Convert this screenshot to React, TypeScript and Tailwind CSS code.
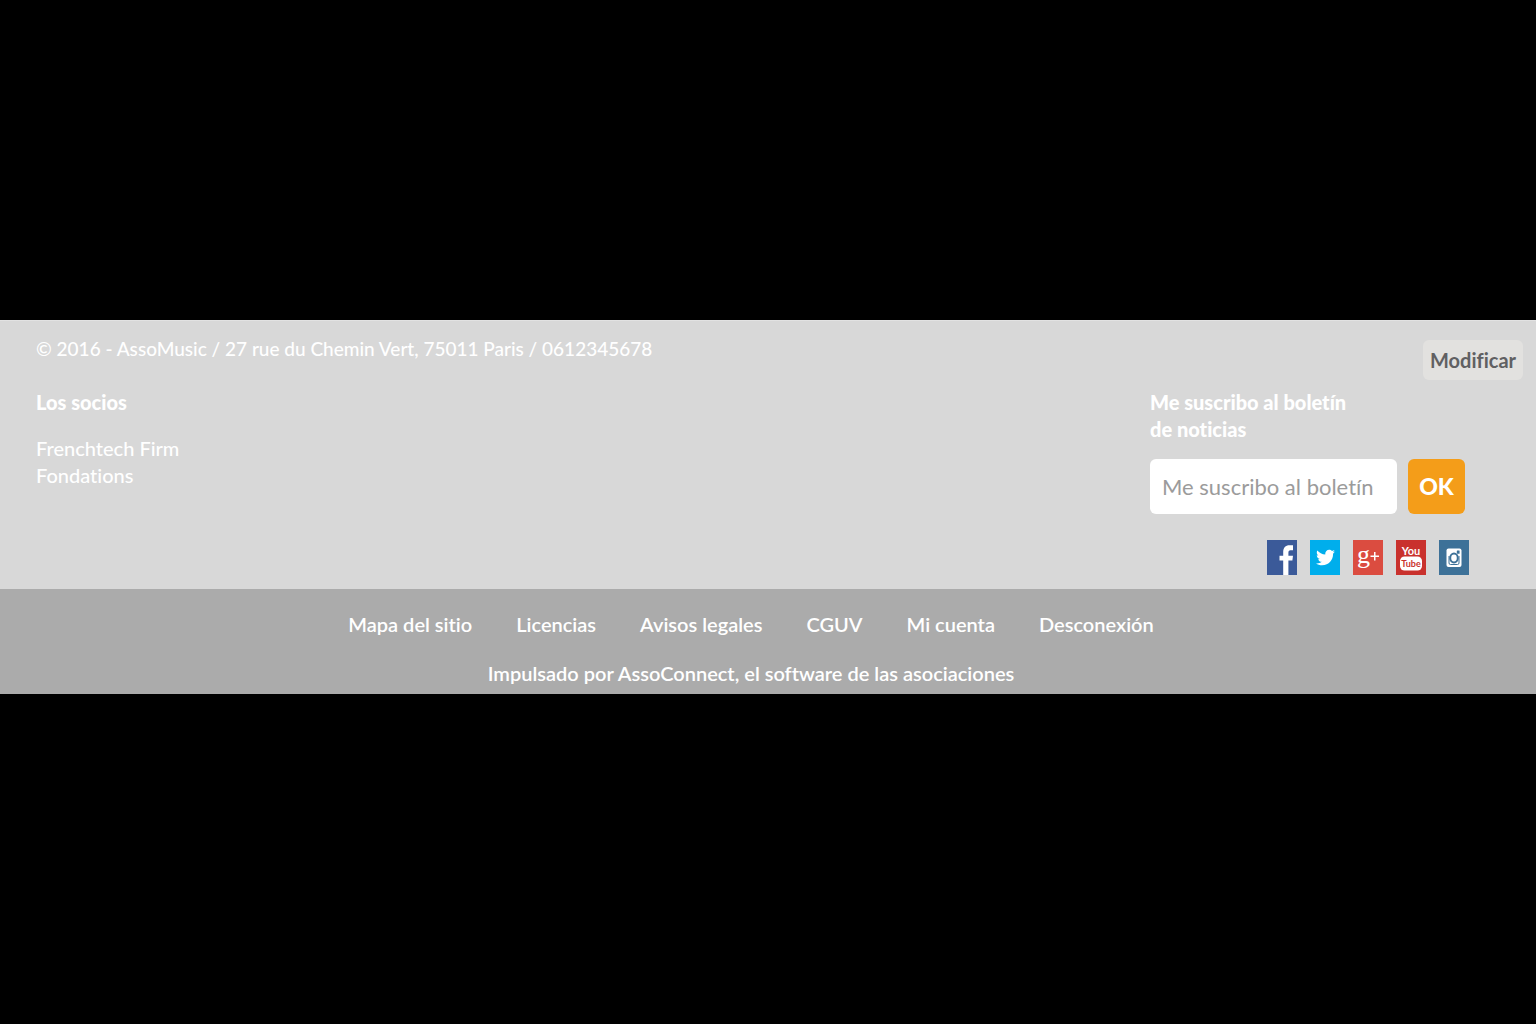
import type { ReactNode } from "react";
import { FaTwitter } from "react-icons/fa";

const partners = ["Frenchtech Firm", "Fondations"];

const links = ["Mapa del sitio", "Licencias", "Avisos legales", "CGUV", "Mi cuenta", "Desconexión"];

function SocialLink({ label, color, children }: { label: string; color: string; children: ReactNode }) {
  return (
    <a href="#" aria-label={label} className={`flex h-[35px] w-[30px] items-center justify-center text-white ${color}`}>
      {children}
    </a>
  );
}

function SocialLinks() {
  return (
    <div className="flex justify-end gap-[13px]">
      <SocialLink label="Facebook" color="bg-[#3b5a99]">
        <svg viewBox="0 0 30 35" className="size-full" fill="currentColor" aria-hidden="true">
          <path d="M16.200 35V20.500H12.500v-4.700h3.700v-3.300C16.200 7.800 18.500 5.300 22.500 5.300H26V10.300h-2.500c-1.600 0-2.100.8-2.100 2.600v2.900H26l-.6 4.700h-4V35z" />
        </svg>
      </SocialLink>
      <SocialLink label="Twitter" color="bg-[#00aeec]">
        <FaTwitter size={19} aria-hidden="true" />
      </SocialLink>
      <SocialLink label="Google+" color="bg-[#db4c40]">
        <svg viewBox="0 0 30 35" className="size-full" fill="currentColor" aria-hidden="true">
          <text x="4" y="23" fontSize="26" fontFamily="Liberation Serif, serif">g</text>
          <path d="M21 12h1.500v3.500H26V17h-3.500v3.500H21V17h-3.500v-1.500H21z" />
        </svg>
      </SocialLink>
      <SocialLink label="YouTube" color="bg-[#c9312d]">
        <svg viewBox="0 0 30 35" className="size-full" fill="currentColor" aria-hidden="true">
          <text x="15" y="14.500" textAnchor="middle" fontSize="11" fontWeight="700" fontFamily="Lato, sans-serif">You</text>
          <rect x="4" y="16.500" width="22" height="14" rx="4.500" />
          <text x="15" y="27" textAnchor="middle" fontSize="9" fontWeight="700" fontFamily="Lato, sans-serif" fill="#c9312d">Tube</text>
        </svg>
      </SocialLink>
      <SocialLink label="Instagram" color="bg-[#3d7198]">
        <svg viewBox="0 0 30 35" className="size-full" aria-hidden="true">
          <rect x="7.500" y="8.500" width="15" height="18.500" rx="2" fill="currentColor" />
          <path d="M10 16v7q0 1.500 1.500 1.500h7q1.500 0 1.500-1.500v-7" fill="none" stroke="#3d7198" strokeWidth="1" />
          <ellipse cx="15" cy="18" rx="3.800" ry="4.400" fill="currentColor" stroke="#3d7198" strokeWidth="2" />
          <rect x="17.800" y="10.500" width="2.800" height="3.300" rx=".5" fill="#3d7198" />
        </svg>
      </SocialLink>
    </div>
  );
}

export default function App() {
  return (
    <div className="flex min-h-screen flex-col justify-center bg-black pb-[10px] font-['Lato',sans-serif] text-[20px] leading-[27px] font-medium text-white [font-variant-ligatures:none]">
      <footer>
        <div className="border-t border-[#e2e2e2] bg-[#d8d8d8] pt-[14px] pb-[14px] pl-9">
          <div className="flex items-start justify-between pr-[13px]">
            <p className="text-[19px]">© 2016 - AssoMusic / 27 rue du Chemin Vert, 75011 Paris / 0612345678</p>
            <button type="button" className="mt-[5px] h-10 rounded-md bg-[#e2e1df] px-[7px] font-bold text-[#606062]">
              Modificar
            </button>
          </div>
          <div className="mt-[9px] flex justify-between pr-[67px]">
            <section>
              <h2 className="font-black">Los socios</h2>
              <ul className="mt-[19px]">
                {partners.map((name) => (
                  <li key={name}>
                    <a href="#">{name}</a>
                  </li>
                ))}
              </ul>
            </section>
            <section className="w-[319px]">
              <h2 className="font-black">
                <label htmlFor="newsletter">
                  Me suscribo al boletín
                  <br />
                  de noticias
                </label>
              </h2>
              <form className="mt-4 mb-[26px] flex gap-[11px]" onSubmit={(e) => e.preventDefault()}>
                <input
                  id="newsletter"
                  type="text"
                  placeholder="Me suscribo al boletín"
                  className="h-[55px] w-[247px] rounded-md bg-white px-3 text-[22px] font-normal text-gray-700 outline-none placeholder:text-[#9b9b9b]"
                />
                <button type="submit" className="h-[55px] w-[57px] rounded-md bg-[#f49d19] text-[23px] font-black">
                  OK
                </button>
              </form>
              <SocialLinks />
            </section>
          </div>
        </div>
        <div className="bg-[#ababab] pt-[22px] pr-[34px] pb-[7px] text-center font-semibold">
          <nav className="flex flex-wrap justify-center gap-x-11">
            {links.map((label) => (
              <a key={label} href="#">
                {label}
              </a>
            ))}
          </nav>
          <p className="mt-[22px]">
            <a href="#">Impulsado por AssoConnect, el software de las asociaciones</a>
          </p>
        </div>
      </footer>
    </div>
  );
}
